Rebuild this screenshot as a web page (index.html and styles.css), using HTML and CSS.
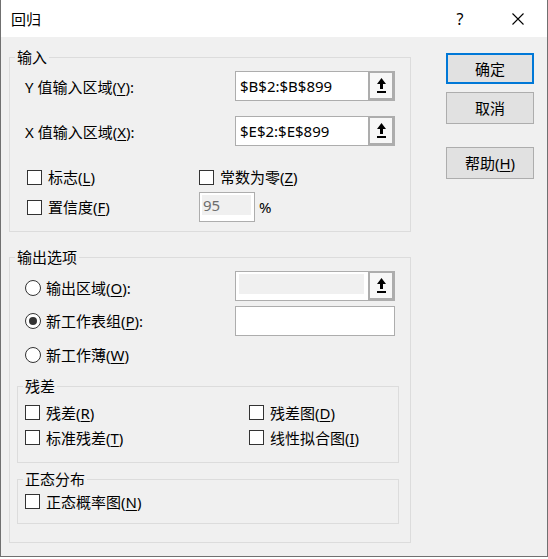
FILE: index.html
```html
<!DOCTYPE html>
<html lang="zh-CN">
<head>
<meta charset="utf-8">
<title>回归</title>
<link rel="stylesheet" href="styles.css">
</head>
<body>
<div class="dialog">
  <div class="titlebar">
    <div class="title">回归</div>
    <div class="tb-btn help">?</div>
    <div class="tb-btn close">
      <svg width="12" height="12" viewBox="0 0 12 12"><path d="M0.5 0.5L11.5 11.5M11.5 0.5L0.5 11.5" stroke="#000" stroke-width="1.1" fill="none"/></svg>
    </div>
  </div>
  <div class="main">
    <div class="left">
      <fieldset class="group">
        <legend>输入</legend>
        <div class="g-body g-input">
          <div class="field-row">
            <div class="lbl">Y 值输入区域(<u>Y</u>):</div>
            <div class="refbox">
              <div class="field">$B$2:$B$899</div>
              <div class="pick"><svg width="9" height="15" viewBox="0 0 9 15"><path d="M4.5 0L0 6H3V11H6V6H9Z" fill="#000"/><rect x="0" y="13" width="9" height="2" fill="#000"/></svg></div>
            </div>
          </div>
          <div class="field-row row-gap">
            <div class="lbl">X 值输入区域(<u>X</u>):</div>
            <div class="refbox">
              <div class="field">$E$2:$E$899</div>
              <div class="pick"><svg width="9" height="15" viewBox="0 0 9 15"><path d="M4.5 0L0 6H3V11H6V6H9Z" fill="#000"/><rect x="0" y="13" width="9" height="2" fill="#000"/></svg></div>
            </div>
          </div>
          <div class="chk-row first-chk">
            <div class="chk-cell"><span class="cb"></span>标志(<u>L</u>)</div>
            <div class="chk-cell"><span class="cb"></span>常数为零(<u>Z</u>)</div>
          </div>
          <div class="chk-row">
            <div class="chk-cell"><span class="cb"></span>置信度(<u>F</u>)</div>
            <div class="numbox"><div class="numfill">95</div></div>
            <span class="pct">%</span>
          </div>
        </div>
      </fieldset>

      <fieldset class="group out-group">
        <legend>输出选项</legend>
        <div class="g-body g-output">
          <div class="field-row radio-row r1">
            <div class="rlbl"><span class="rb"></span>输出区域(<u>O</u>):</div>
            <div class="refbox">
              <div class="field disabled"><div class="fill"></div></div>
              <div class="pick"><svg width="9" height="15" viewBox="0 0 9 15"><path d="M4.5 0L0 6H3V11H6V6H9Z" fill="#000"/><rect x="0" y="13" width="9" height="2" fill="#000"/></svg></div>
            </div>
          </div>
          <div class="field-row radio-row r2">
            <div class="rlbl"><span class="rb on"></span>新工作表组(<u>P</u>):</div>
            <div class="plainbox"></div>
          </div>
          <div class="field-row radio-row r3">
            <div class="rlbl"><span class="rb"></span>新工作薄(<u>W</u>)</div>
          </div>

          <fieldset class="group sub-group">
            <legend>残差</legend>
            <div class="sub-body resid">
              <div class="chk-row2">
                <div class="chk-cell2"><span class="cb"></span>残差(<u>R</u>)</div>
                <div class="chk-cell2"><span class="cb"></span>残差图(<u>D</u>)</div>
              </div>
              <div class="chk-row2">
                <div class="chk-cell2"><span class="cb"></span>标准残差(<u>T</u>)</div>
                <div class="chk-cell2"><span class="cb"></span>线性拟合图(<u>I</u>)</div>
              </div>
            </div>
          </fieldset>

          <fieldset class="group sub-group normal">
            <legend>正态分布</legend>
            <div class="sub-body norm">
              <div class="chk-row2">
                <div class="chk-cell2"><span class="cb"></span>正态概率图(<u>N</u>)</div>
              </div>
            </div>
          </fieldset>
        </div>
      </fieldset>
    </div>
    <div class="right">
      <div class="btn default">确定</div>
      <div class="btn cancel">取消</div>
      <div class="btn helpbtn">帮助(<u>H</u>)</div>
    </div>
  </div>
</div>
</body>
</html>
```

FILE: styles.css
```css
html, body {
  margin: 0;
  padding: 0;
  background: #ffffff;
}

body {
  font-family: "Noto Sans", "Noto Sans CJK SC", sans-serif;
  font-size: 15px;
  line-height: 20px;
  color: #000;
}

.dialog {
  width: 548px;
  height: 557px;
  box-sizing: border-box;
  border: 1px solid #707070;
  border-top: none;
  background: #f0f0f0;
  display: flex;
  flex-direction: column;
}

.titlebar {
  height: 37px;
  background: #ffffff;
  display: flex;
  align-items: center;
  flex: none;
}

.title {
  flex: 1;
  padding-left: 10px;
}

.tb-btn {
  width: 58px;
  height: 37px;
  display: flex;
  align-items: center;
  justify-content: center;
}

.help {
  font-size: 16px;
  padding-top: 1px;
  box-sizing: border-box;
}

.main {
  display: flex;
  padding-left: 8px;
  flex: 1;
}

.left {
  width: 402px;
  margin-top: 10px;
  flex: none;
}

.right {
  margin-left: 35px;
  padding-top: 16px;
  display: flex;
  flex-direction: column;
}

.btn {
  width: 88px;
  height: 32px;
  box-sizing: border-box;
  border: 1px solid #adadad;
  background: #e1e1e1;
  display: flex;
  align-items: center;
  justify-content: center;
}

.btn.default {
  border: 2px solid #0078d7;
  height: 31px;
}

.btn.cancel {
  margin-top: 8px;
}

.btn.helpbtn {
  margin-top: 23px;
}

u {
  text-decoration: underline;
  text-underline-offset: 2px;
}

/* group boxes */
.group {
  margin: 0;
  padding: 0;
  min-width: 0;
  border: 1px solid #dcdcdc;
  box-sizing: border-box;
}

.group legend {
  margin-left: 5px;
  padding: 0 2px;
  height: 20px;
  line-height: 20px;
}

.g-input {
  padding: 4px 0 9px 15px;
}

.field-row {
  display: flex;
  align-items: flex-start;
  height: 30px;
}

.row-gap {
  margin-top: 15px;
}

.lbl {
  width: 210px;
  margin-top: 6px;
  flex: none;
}

.refbox {
  display: flex;
  width: 160px;
  height: 30px;
  flex: none;
}

.field {
  width: 133px;
  height: 30px;
  box-sizing: border-box;
  border: 1px solid #adadad;
  border-right: none;
  background: #fff;
  padding-left: 4px;
  line-height: 28px;
}

.field.disabled {
  padding: 2px 4px 6px 3px;
}

.fill {
  height: 20px;
  background: #f0f0f0;
}

.pick {
  width: 27px;
  height: 30px;
  box-sizing: border-box;
  border-style: solid;
  border-color: #adadad;
  border-width: 2px 3px 3px 2px;
  background: #f7f7f7;
  display: flex;
  justify-content: center;
  padding-top: 5px;
}

.chk-row {
  display: flex;
  align-items: center;
  height: 30px;
  padding-left: 2px;
}

.first-chk {
  margin-top: 16px;
}

.chk-cell {
  width: 172px;
  display: flex;
  align-items: center;
  flex: none;
}

.cb {
  width: 15px;
  height: 15px;
  box-sizing: border-box;
  border: 1px solid #333;
  background: #fff;
  margin-right: 6px;
  flex: none;
}

.numbox {
  width: 56px;
  height: 30px;
  box-sizing: border-box;
  border: 1px solid #adadad;
  background: #fff;
  padding: 2px 3px 5px 2px;
  flex: none;
}

.numfill {
  height: 20px;
  background: #f0f0f0;
  color: #6d6d6d;
  padding-left: 1px;
  line-height: 20px;
}

.pct {
  margin-left: 4px;
}

/* output group */
.out-group {
  margin-top: 15px;
}

.g-output {
  padding: 4px 11px 18px 7px;
}

.radio-row {
  padding-left: 8px;
}

.r1 .rlbl {
  margin-top: 7px;
}

.r2 {
  margin-top: 5px;
}

.r3 {
  margin-top: 4px;
}

.r2 .rlbl,
.r3 .rlbl {
  margin-top: 5px;
}

.rlbl {
  width: 210px;
  display: flex;
  align-items: center;
  flex: none;
}

.rb {
  width: 16px;
  height: 16px;
  box-sizing: border-box;
  border: 1px solid #333;
  border-radius: 50%;
  background: #fff;
  margin-right: 5px;
  display: flex;
  align-items: center;
  justify-content: center;
  flex: none;
}

.rb.on::after {
  content: "";
  width: 8px;
  height: 8px;
  border-radius: 50%;
  background: #333;
}

.plainbox {
  width: 160px;
  height: 30px;
  box-sizing: border-box;
  border: 1px solid #adadad;
  background: #fff;
  flex: none;
}

.sub-group {
  margin-top: 6px;
}

.sub-body {
  padding: 4px 0 12px 7px;
}

.sub-body.norm {
  padding: 0 0 9px 7px;
}

.chk-row2 {
  display: flex;
  align-items: center;
  height: 25px;
}

.chk-cell2 {
  width: 224px;
  display: flex;
  align-items: center;
  flex: none;
}

.chk-cell2 + .chk-cell2 {
  width: auto;
  flex: 1;
}
```
